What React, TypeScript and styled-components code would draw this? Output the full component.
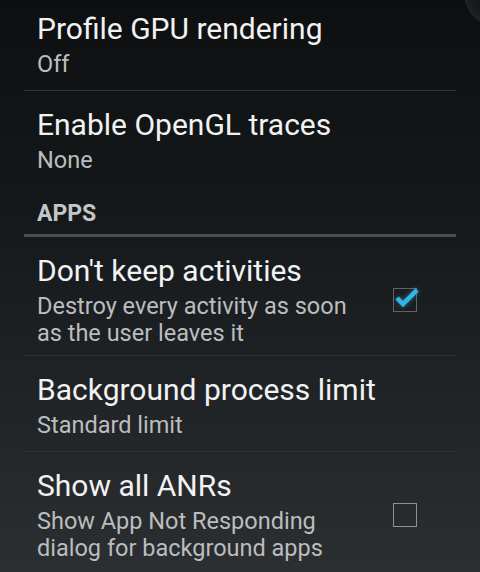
import React from 'react';
import styled, { createGlobalStyle } from 'styled-components';

const GlobalStyle = createGlobalStyle`
  html, body {
    margin: 0;
    padding: 0;
    height: 100%;
    overflow: hidden;
  }
  body {
    font-family: Roboto, "Liberation Sans", sans-serif;
    background: #0e1012;
  }
`;

interface Pref {
    title: string
    summary: string
    checkbox?: "checked" | "unchecked"
}

interface Section {
    header?: string
    items: Array<Pref>
}

const sections: Array<Section> = [
    {
        items: [
            { title: "Profile GPU rendering", summary: "Off" },
            { title: "Enable OpenGL traces", summary: "None" },
        ]
    },
    {
        header: "APPS",
        items: [
            { title: "Don't keep activities", summary: "Destroy every activity as soon as the user leaves it", checkbox: "checked" },
            { title: "Background process limit", summary: "Standard limit" },
            { title: "Show all ANRs", summary: "Show App Not Responding dialog for background apps", checkbox: "unchecked" },
        ]
    }
];

const Screen = styled.div`
  position: relative;
  width: 480px;
  height: 572px;
  overflow: hidden;
  background: linear-gradient(180deg, #0d0f10 0%, #15181a 35%, #212427 70%, #2b2f32 100%);
`;

// faint rounded glare in the top right corner
const Glare = styled.div`
  position: absolute;
  top: -44px;
  right: -56px;
  width: 72px;
  height: 72px;
  border-radius: 50%;
  background: radial-gradient(circle, rgba(40, 44, 47, 0.35) 55%, rgba(78, 82, 85, 0.55) 92%, rgba(40, 44, 47, 0) 100%);
`;

const List = styled.div`
  margin: -5px 24px 0 24px;
`;

const SectionHeader = styled.div`
  padding: 13px 0 6px 13px;
  font-size: 23px;
  line-height: 28px;
  font-weight: 700;
  color: #c4c6c7;
  border-bottom: 3px solid #4b4f52;
`;

const Row = styled.div<{ $last: boolean }>`
  box-sizing: border-box;
  display: flex;
  align-items: flex-start;
  min-height: 96px;
  padding: 16px 0 8px 13px;
  border-bottom: 1px solid ${p => p.$last ? "transparent" : "#2e3234"};
`;

const Texts = styled.div`
  flex: 1;
  min-width: 0;
`;

const Title = styled.div`
  font-size: 30px;
  line-height: 36px;
  color: #f2f2f2;
  white-space: nowrap;
`;

const Summary = styled.div`
  margin-top: 4px;
  font-size: 23.5px;
  line-height: 27px;
  color: #bbbdbe;
`;

const Box = styled.div<{ $checked: boolean }>`
  position: relative;
  flex: none;
  align-self: center;
  width: 22px;
  height: 22px;
  margin: 0 39px 0 24px;
  border: 1.5px solid ${p => p.$checked ? "#5e6366" : "#8e9294"};
`;

const Tick = styled.svg`
  position: absolute;
  left: -2px;
  top: -2px;
  overflow: visible;
  filter: drop-shadow(0 0 2px rgba(51, 181, 229, 0.6));
`;

function CheckBox(props: { checked: boolean }) {
    return (
        <Box $checked={props.checked}>
            {props.checked &&
                <Tick width="26" height="26" viewBox="0 0 26 26">
                    <path d="M5 11 L11 17 L25 3" fill="none" stroke="#33b5e5" strokeWidth="4.5" strokeLinejoin="miter" />
                </Tick>}
        </Box>
    );
}

function App() {
    const renderItems = (items: Array<Pref>) => {
        return items.map((item, index) => {
            const last = index === items.length - 1;
            return (
                <Row key={index} $last={last}>
                    <Texts>
                        <Title>{item.title}</Title>
                        <Summary>{item.summary}</Summary>
                    </Texts>
                    {item.checkbox && <CheckBox checked={item.checkbox === "checked"} />}
                </Row>
            );
        });
    };
    return (
        <Screen>
            <GlobalStyle />
            <List>
                {sections.map((section, index) => (
                    <div key={index}>
                        {section.header && <SectionHeader>{section.header}</SectionHeader>}
                        {renderItems(section.items)}
                    </div>
                ))}
            </List>
            <Glare />
        </Screen>
    );
}

export default App;
